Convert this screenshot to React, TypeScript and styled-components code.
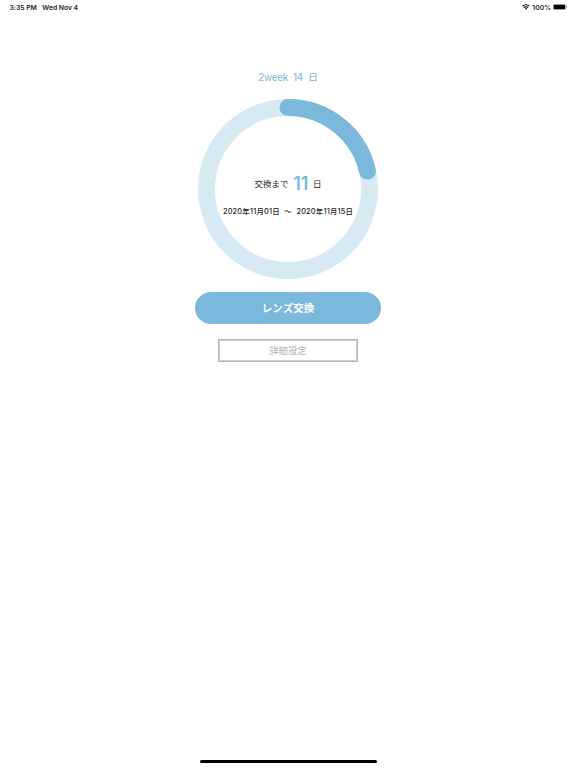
import React from 'react';
import styled, { createGlobalStyle } from 'styled-components';

const GlobalStyle = createGlobalStyle`
  * { box-sizing: border-box; }
  body {
    margin: 0;
    background: #fff;
    font-family: Inter, 'Noto Sans CJK JP', sans-serif;
    color: #1c1c1c;
  }
`;

const BLUE = '#7ab9db';
const PALE = '#d7e9f3';

const Screen = styled.div`
  width: 100%;
  height: 100vh;
  display: flex;
  flex-direction: column;
  align-items: center;
  overflow: hidden;
`;

const StatusBar = styled.header`
  width: 100%;
  height: 14px;
  padding: 0 9px 0 9.5px;
  display: flex;
  align-items: center;
  justify-content: space-between;
  font-size: 6.8px;
  line-height: 14px;
  font-weight: 600;
`;

const StatusGroup = styled.div<{ $gap: number; $tracking?: number }>`
  display: flex;
  align-items: center;
  gap: ${({ $gap }) => $gap}px;
  letter-spacing: ${({ $tracking = 0 }) => $tracking}px;
  white-space: nowrap;
  > span { padding-top: 1px; }
`;

const Content = styled.main`
  flex: 1;
  display: flex;
  flex-direction: column;
  align-items: center;
`;

const Title = styled.h1`
  margin: 53px 0 0;
  height: 20px;
  display: flex;
  align-items: center;
  gap: 5px;
  font-size: 10px;
  line-height: 20px;
  font-weight: 400;
  letter-spacing: -0.3px;
  color: ${BLUE};
`;

const Dial = styled.section`
  margin-top: 11.6px;
  width: 180px;
  height: 180px;
  display: grid;
  place-items: center;
  > * { grid-area: 1 / 1; }
`;

const DialText = styled.div`
  display: flex;
  flex-direction: column;
  align-items: center;
  gap: 9px;
  padding-top: 14.4px;
  white-space: nowrap;
`;

const Remaining = styled.div`
  height: 24px;
  display: flex;
  align-items: center;
  gap: 4.6px;
  font-size: 8.5px;
  line-height: 24px;
`;

const Days = styled.strong`
  font-size: 18px;
  font-weight: 600;
  color: ${BLUE};
`;

const Period = styled.div`
  display: flex;
  gap: 4.5px;
  font-size: 7.4px;
  line-height: 14px;
  font-weight: 500;
  letter-spacing: 0.19px;
`;

const PrimaryButton = styled.button`
  margin-top: 13px;
  width: 186.6px;
  height: 32px;
  padding: 1px 0 0;
  border: 0;
  border-radius: 16px;
  background: ${BLUE};
  color: #fff;
  font: 700 10.5px/31px Inter, 'Noto Sans CJK JP', sans-serif;
`;

const OutlineButton = styled.button`
  margin-top: 15.4px;
  width: 140px;
  height: 23px;
  padding: 0;
  border: 1px solid #b4b4b4;
  box-shadow: inset 0 0 0 1px #d2d2d2;
  background: #fff;
  color: #b3b3b3;
  font: 400 9.4px/21px Inter, 'Noto Sans CJK JP', sans-serif;
`;

const HomeIndicator = styled.div`
  width: 177px;
  height: 3px;
  margin-bottom: 4.7px;
  border-radius: 2px;
  background: #000;
`;

const RADIUS = 81.5;
const CIRCUMFERENCE = 2 * Math.PI * RADIUS;

function ProgressRing({ fraction }: { fraction: number }) {
  return (
    <svg width="180" height="180" viewBox="0 0 180 180" fill="none" strokeWidth="17">
      <circle cx="90" cy="90" r={RADIUS} stroke={PALE} />
      <circle
        cx="90"
        cy="90"
        r={RADIUS}
        stroke={BLUE}
        strokeLinecap="round"
        strokeDasharray={`${CIRCUMFERENCE * fraction} ${CIRCUMFERENCE}`}
        transform="rotate(-90 90 90)"
      />
    </svg>
  );
}

function WifiIcon() {
  return (
    <svg width="8" height="6" viewBox="0 0 16 12" fill="none" stroke="#000" strokeWidth="2.3">
      <path d="M1 4.4a10 10 0 0 1 14 0M3.6 7.3a6.2 6.2 0 0 1 8.8 0" />
      <path d="M5.6 9.2a3.5 3.5 0 0 1 4.8 0L8 11.7Z" fill="#000" stroke="none" />
    </svg>
  );
}

function BatteryIcon() {
  return (
    <svg width="14" height="6" viewBox="0 0 14 6">
      <rect x="0.25" y="0.25" width="12.3" height="5.5" rx="1.5" fill="none" stroke="#777" strokeWidth="0.5" />
      <rect x="0.7" y="0.7" width="11.4" height="4.6" rx="1" fill="#000" />
      <path d="M13 2a1 1 0 0 1 0 2Z" fill="#999" />
    </svg>
  );
}

export default function App() {
  return (
    <Screen>
      <GlobalStyle />
      <StatusBar>
        <StatusGroup $gap={5.5} $tracking={-0.02}>
          <span>3:35 PM</span>
          <span>Wed Nov 4</span>
        </StatusGroup>
        <StatusGroup $gap={2}>
          <WifiIcon />
          <span>100%</span>
          <BatteryIcon />
        </StatusGroup>
      </StatusBar>
      <Content>
        <Title>
          <span>2week</span>
          <span>14</span>
          <span>日</span>
        </Title>
        <Dial>
          <ProgressRing fraction={3 / 14} />
          <DialText>
            <Remaining>
              <span>交換まで</span>
              <Days>11</Days>
              <span>日</span>
            </Remaining>
            <Period>
              <span>2020年11月01日</span>
              <span>〜</span>
              <span>2020年11月15日</span>
            </Period>
          </DialText>
        </Dial>
        <PrimaryButton type="button">レンズ交換</PrimaryButton>
        <OutlineButton type="button">詳細設定</OutlineButton>
      </Content>
      <HomeIndicator />
    </Screen>
  );
}
